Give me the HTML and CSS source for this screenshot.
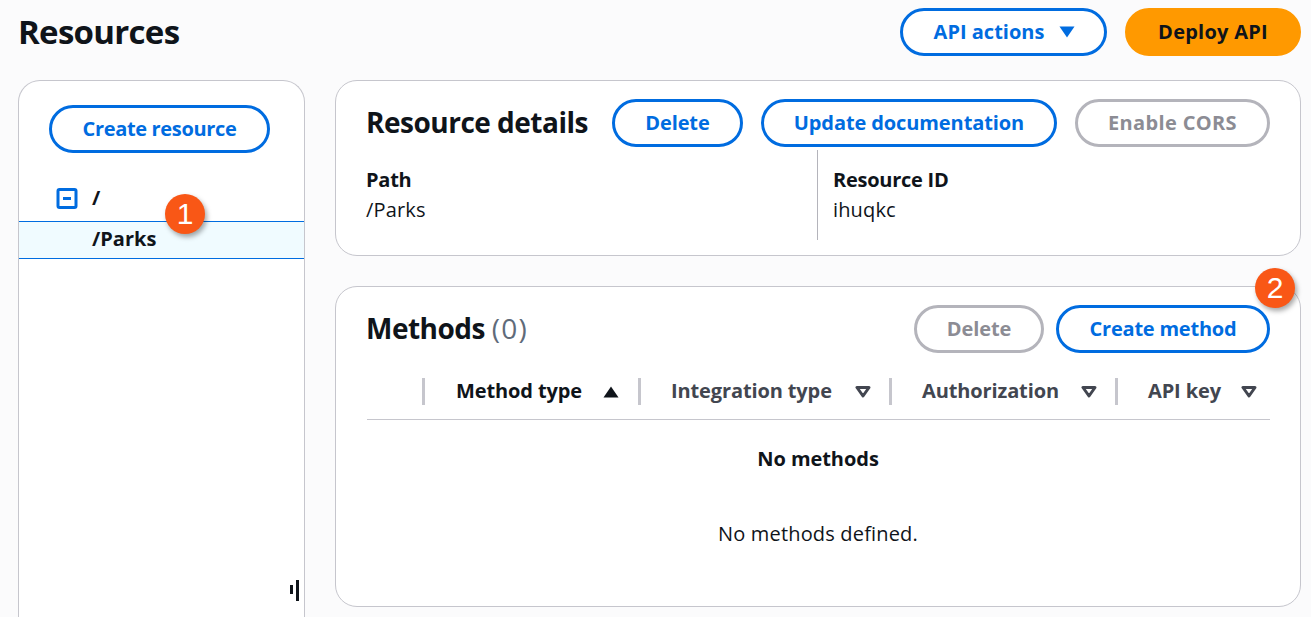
FILE: index.html
```html
<!DOCTYPE html>
<html lang="en">
<head>
<meta charset="utf-8">
<title>Resources</title>
<link rel="stylesheet" href="styles.css">
</head>
<body>
<div class="page">
  <header class="top">
    <h1 class="title">Resources</h1>
    <div class="top-actions">
      <button class="btn btn-actions">API actions
        <svg class="caret" width="16" height="12" viewBox="0 0 16 12"><path d="M0.5 0.5H15.5L8 11.5Z" fill="#006ce0"/></svg>
      </button>
      <button class="btn btn-primary">Deploy API</button>
    </div>
  </header>
  <div class="columns">
    <aside class="side card">
      <div class="side-action"><button class="btn btn-create">Create resource</button></div>
      <div class="tree-root">
        <svg class="minus" width="22" height="22" viewBox="0 0 22 22"><rect x="2" y="1.5" width="18" height="18" rx="1.5" fill="none" stroke="#006ce0" stroke-width="3"/><path d="M7 10.5H15" stroke="#006ce0" stroke-width="3"/></svg>
        <span class="tree-label">/</span>
      </div>
      <div class="tree-child"><span class="tree-label">/Parks</span></div>
      <svg class="grip" width="10" height="22" viewBox="0 0 10 22"><rect x="0" y="5" width="3" height="9" fill="#0f141a"/><rect x="6" y="0" width="3" height="21" fill="#0f141a"/></svg>
      <span class="badge badge-one">1</span>
    </aside>
    <main class="main">
      <section class="card details">
        <div class="details-head">
          <h2 class="heading">Resource details</h2>
          <button class="btn btn-delete">Delete</button>
          <button class="btn btn-doc">Update documentation</button>
          <button class="btn btn-off btn-cors">Enable CORS</button>
        </div>
        <div class="details-grid">
          <div class="field">
            <div class="field-label">Path</div>
            <div class="field-value">/Parks</div>
          </div>
          <div class="field field-second">
            <div class="field-label">Resource ID</div>
            <div class="field-value">ihuqkc</div>
          </div>
        </div>
      </section>
      <section class="card methods">
        <div class="methods-head">
          <h2 class="heading">Methods <span class="count">(0)</span></h2>
          <div class="methods-actions">
            <button class="btn btn-off btn-del2">Delete</button>
            <button class="btn btn-method">Create method</button>
          </div>
        </div>
        <div class="thead">
          <div class="th th-select"></div>
          <div class="th th-type"><span class="th-sorted">Method type</span>
            <svg width="16" height="12" viewBox="0 0 16 12"><path d="M0.5 11.5H15.5L8 0.5Z" fill="#0f141a"/></svg>
          </div>
          <div class="th th-int"><span>Integration type</span>
            <svg width="16" height="12" viewBox="0 0 16 12"><path d="M2 1.5H14L8 10Z" fill="none" stroke="#424650" stroke-width="3" stroke-linejoin="round"/></svg>
          </div>
          <div class="th th-auth"><span>Authorization</span>
            <svg width="16" height="12" viewBox="0 0 16 12"><path d="M2 1.5H14L8 10Z" fill="none" stroke="#424650" stroke-width="3" stroke-linejoin="round"/></svg>
          </div>
          <div class="th th-key"><span>API key</span>
            <svg width="16" height="12" viewBox="0 0 16 12"><path d="M2 1.5H14L8 10Z" fill="none" stroke="#424650" stroke-width="3" stroke-linejoin="round"/></svg>
          </div>
        </div>
        <div class="empty">
          <div class="empty-title">No methods</div>
          <div class="empty-text">No methods defined.</div>
        </div>
        <span class="badge badge-two">2</span>
      </section>
    </main>
  </div>
</div>
</body>
</html>
```

FILE: styles.css
```css
* { box-sizing: border-box; }
html, body { margin: 0; height: 100%; overflow: hidden; }
body {
  background: #fbfbfc;
  color: #0f141a;
  font-family: "Open Sans", "Noto Sans", Arial, sans-serif;
  font-size: 20px;
}
.page { padding: 8px 10px 0 18px; }
.top { display: flex; justify-content: space-between; align-items: center; height: 48px; }
.title { margin: 0; font-size: 33px; font-weight: 700; line-height: 48px; letter-spacing: -0.7px; }
.top-actions { display: flex; gap: 18px; }
.btn {
  display: inline-flex; align-items: center; justify-content: center;
  height: 48px; border: 3px solid #006ce0; border-radius: 24px; background: #fff;
  color: #006ce0; font: 700 20px/1 "Open Sans", Arial, sans-serif; padding: 0; white-space: nowrap;
}
.btn-actions { width: 207px; gap: 15px; padding-left: 2px; }
.btn-primary { width: 176px; background: #ff9900; border-color: #ff9900; color: #0f141a; letter-spacing: 0.25px; }
.btn-off { border-color: #b4b4bb; color: #8c8c94; }
.columns { display: flex; gap: 30px; margin-top: 24px; }
.card { background: #fff; border: 1px solid #c6c6cd; border-radius: 22px; position: relative; }
.side { width: 287px; height: 560px; flex: none; border-bottom: 0; border-bottom-left-radius: 0; border-bottom-right-radius: 0; }
.side-action { padding: 24px 0 0 30px; }
.btn-create { width: 221px; letter-spacing: -0.33px; }
.tree-root { display: flex; align-items: center; height: 44px; margin-top: 24px; padding-left: 37px; }
.tree-label { font-weight: 700; font-size: 20px; line-height: 26px; }
.tree-root .tree-label { margin-left: 14px; padding-bottom: 2px; }
.tree-child { height: 38px; display: flex; align-items: center; padding: 0 0 2px 73px; background: #f0fbff; border-top: 1px solid #006ce0; border-bottom: 1px solid #006ce0; }
.minus { flex: none; }
.grip { position: absolute; left: 271px; top: 499px; }
.badge {
  position: absolute; width: 40px; height: 40px; border-radius: 50%;
  background: #f95716; color: #fff; box-shadow: 2px 3px 5px rgba(0,0,0,.35);
  display: flex; align-items: center; justify-content: center;
  font: 400 30px/1 "Liberation Sans", Arial, sans-serif;
}
.badge-one { left: 146px; top: 113px; }
.badge-two { right: 5px; top: -19px; }
.main { flex: 1; display: flex; flex-direction: column; gap: 30px; min-width: 0; }
.details { height: 176px; padding: 18px 30px 0; }
.details-head { display: flex; align-items: center; }
.heading { margin: 0; font-size: 28px; font-weight: 700; line-height: 46px; padding-bottom: 2px; letter-spacing: -0.5px; }
.btn-delete { width: 131px; margin-left: 24px; letter-spacing: -0.1px; }
.btn-doc { width: 296px; margin-left: 18px; letter-spacing: -0.1px; }
.btn-cors { width: 195px; margin-left: 18px; letter-spacing: 0.35px; }
.details-grid { display: grid; grid-template-columns: 451px 1fr; margin-top: 3px; }
.field { height: 90px; padding-top: 15px; font-size: 20px; line-height: 30px; letter-spacing: 0.15px; }
.field-second { border-left: 1px solid #b4b4bb; padding-left: 15px; }
.field-label { font-weight: 700; letter-spacing: -0.25px; }
.methods { height: 321px; padding: 18px 30px 0; }
.methods-head { display: flex; justify-content: space-between; align-items: center; }
.count { font-weight: 400; color: #5f6b7a; letter-spacing: 1.2px; }
.methods-actions { display: flex; gap: 12px; }
.btn-del2 { width: 130px; letter-spacing: -0.1px; }
.btn-method { width: 214px; letter-spacing: -0.22px; }
.thead { display: flex; height: 42px; margin-top: 25px; margin-left: 1px; border-bottom: 1px solid #c6c6cd; align-items: flex-start; }
.th {
  height: 27px; display: flex; align-items: center; justify-content: space-between;
  border-right: 3px solid #c6c6cd; font-weight: 700; color: #424650; font-size: 20px; padding: 0 18px 2px 30px;
  letter-spacing: -0.12px;
}
.th svg { position: relative; top: 1px; }
.th-select { width: 58px; padding: 0; }
.th-type { width: 216px; padding: 0 19px 2px 31px; }
.th-sorted { color: #0f141a; }
.th-int { width: 251px; }
.th-auth { width: 226px; }
.th-key { flex: 1; border-right: 0; padding-right: 13px; }
.empty { text-align: center; padding-top: 24px; }
.empty-title { font-weight: 700; line-height: 30px; letter-spacing: -0.05px; }
.empty-text { margin-top: 45px; line-height: 30px; letter-spacing: 0.17px; }
```
